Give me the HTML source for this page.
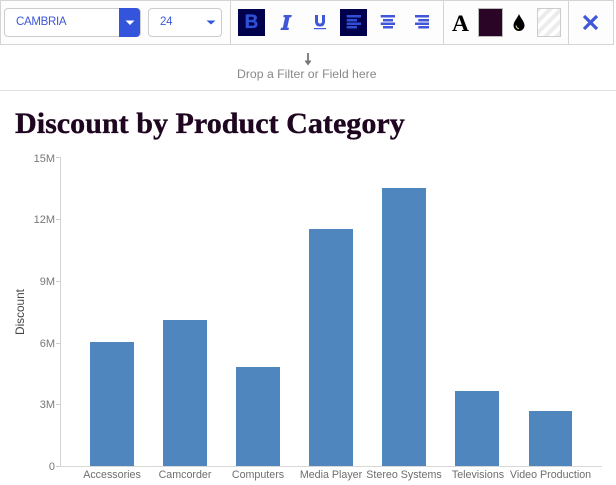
<!DOCTYPE html>
<html><head><meta charset="utf-8">
<style>
html,body{margin:0;padding:0;background:#fff;}
body{width:616px;height:485px;position:relative;overflow:hidden;font-family:"Liberation Sans",sans-serif;}
.a{position:absolute;}
.t{position:absolute;white-space:nowrap;}
.yl{position:absolute;right:561px;font-size:11px;color:#777;line-height:12px;}
.xl{position:absolute;top:468.500px;width:90px;text-align:center;font-size:10.700px;color:#6e6e6e;line-height:13px;white-space:nowrap;}
.bar{position:absolute;background:#5086be;width:44px;}
.tick{position:absolute;left:56px;width:4px;height:1px;background:#ccc;}
</style></head><body>
<div class="a" style="left:0;top:0;width:612px;height:43px;background:#fdfdfd;border:1px solid #d4d4d4;"></div>
<div class="a" style="left:230px;top:0;width:1px;height:44px;background:#d4d4d4;"></div>
<div class="a" style="left:443px;top:0;width:1px;height:44px;background:#d4d4d4;"></div>
<div class="a" style="left:568px;top:0;width:1px;height:44px;background:#d4d4d4;"></div>

<div class="a" style="left:4px;top:8px;width:135px;height:27px;border:1px solid #ccc;border-radius:4px;background:#fff;"></div>
<div class="t" style="left:16px;top:15px;font-size:11.500px;letter-spacing:-.3px;line-height:14px;color:#3f57d8;">CAMBRIA</div>
<div class="a" style="left:119px;top:8px;width:21px;height:29px;background:#3455db;border-radius:0 4px 4px 0;"></div>
<svg class="a" style="left:119px;top:8px" width="21" height="29"><path d="M6.500 12.500h9l-4.500 4.500z" fill="#fff"/></svg>
<div class="a" style="left:148px;top:8px;width:72px;height:27px;border:1px solid #ccc;border-radius:4px;background:#fff;"></div>
<div class="t" style="left:160px;top:15px;font-size:11.500px;letter-spacing:-.3px;line-height:14px;color:#3f57d8;">24</div>
<svg class="a" style="left:205px;top:19px" width="12" height="8"><path d="M1.500 1.500h9l-4.500 4z" fill="#3455db"/></svg>

<div class="a" style="left:238px;top:9px;width:27px;height:27px;background:#00004d;"></div>
<div class="t" style="left:238px;top:8.500px;width:27px;text-align:center;font-size:19px;line-height:27px;font-weight:bold;color:#2f50d4;-webkit-text-stroke:.3px #2f50d4;">B</div>
<svg class="a" style="left:278px;top:12px" width="16" height="20"><path d="M5.800 3h8l-.5 2.300h-1.800L9.200 15.700h1.800l-.5 2.300h-8l.5-2.300h1.800L7.100 5.300H5.300z" fill="#3f57d8"/></svg>
<svg class="a" style="left:312px;top:12px" width="16" height="19"><path d="M4.500 3v6.500c0 2.500 1.300 3.500 3.500 3.500s3.500-1 3.500-3.500V3" stroke="#3f57d8" stroke-width="3" fill="none"/><rect x="2" y="16" width="12" height="1.200" fill="#3f57d8"/></svg>

<div class="a" style="left:340px;top:9px;width:27px;height:27px;background:#00004d;"></div>
<svg class="a" style="left:340px;top:9px" width="27" height="27" fill="#2f50d4"><rect x="6.700" y="6" width="14.300" height="2.500"/><rect x="6.700" y="10" width="10.300" height="2.500"/><rect x="6.700" y="13.500" width="14.300" height="2.500"/><rect x="6.700" y="17" width="10.300" height="2.500"/></svg>
<svg class="a" style="left:375px;top:9px" width="27" height="27" fill="#3f57d8"><rect x="5.700" y="6" width="14.300" height="2.500"/><rect x="8" y="10" width="10" height="2.500"/><rect x="5.700" y="13.500" width="14.300" height="2.500"/><rect x="8" y="17" width="10" height="2.500"/></svg>
<svg class="a" style="left:409px;top:9px" width="27" height="27" fill="#3f57d8"><rect x="6" y="6" width="14" height="2.500"/><rect x="9.300" y="10" width="10.700" height="2.500"/><rect x="6" y="13.500" width="14" height="2.500"/><rect x="9.300" y="17" width="10.700" height="2.500"/></svg>

<div class="t" style="left:447px;top:9.500px;width:27px;text-align:center;font-family:'Liberation Serif',serif;font-weight:bold;font-size:23.500px;line-height:28px;color:#000;">A</div>
<div class="a" style="left:478px;top:8px;width:25px;height:29px;box-sizing:border-box;background:#2a0526;border:1px solid #bbb;"></div>
<svg class="a" style="left:511px;top:13px" width="16" height="19"><path d="M8 1C6.500 5 2.500 8.500 2.500 12.500a5.500 5.500 0 0 0 11 0C13.500 8.500 9.500 5 8 1z" fill="#000"/><path d="M5 12.500c.3 2 1.500 3 3 3.300" stroke="#e8d0a0" stroke-width="1" fill="none"/></svg>
<svg class="a" style="left:537px;top:8px" width="24" height="29">
<defs><pattern id="h" width="8" height="8" patternUnits="userSpaceOnUse" patternTransform="rotate(-45)"><rect width="8" height="8" fill="#fff"/><rect width="8" height="4" fill="#ececec"/></pattern></defs>
<rect x=".5" y=".5" width="23" height="28" fill="url(#h)" stroke="#ccc"/></svg>
<svg class="a" style="left:582px;top:14px" width="17" height="17"><path d="M2 2L15 15M15 2L2 15" stroke="#3f57d8" stroke-width="3.200" fill="none"/></svg>

<svg class="a" style="left:304px;top:52px" width="8" height="14"><path d="M4 1v10M1.500 8.500L4 12l2.500-3.500" stroke="#777" stroke-width="1.800" fill="none"/></svg>
<div class="t" style="left:237px;top:67px;font-size:12.250px;line-height:15px;color:#888;">Drop a Filter or Field here</div>
<div class="a" style="left:0;top:90px;width:616px;height:1px;background:#e0e0e0;"></div>

<div class="t" style="left:15px;top:105.500px;font-family:'Liberation Serif',serif;font-weight:bold;font-size:30.100px;line-height:35px;color:#1e0520;-webkit-text-stroke:.35px #1e0520;">Discount by Product Category</div>

<div class="a" style="left:60px;top:157px;width:1px;height:310px;background:#d4d4d4;"></div>
<div class="a" style="left:60px;top:466px;width:542px;height:1px;background:#d8d8d8;"></div>
<div class="tick" style="top:157px"></div><div class="tick" style="top:219px"></div><div class="tick" style="top:281px"></div><div class="tick" style="top:343px"></div><div class="tick" style="top:404px"></div><div class="tick" style="top:466px"></div>
<div class="yl" style="top:153px">15M</div>
<div class="yl" style="top:214px">12M</div>
<div class="yl" style="top:276px">9M</div>
<div class="yl" style="top:338px">6M</div>
<div class="yl" style="top:399px">3M</div>
<div class="yl" style="top:461px">0</div>
<div class="t" style="left:13px;top:305px;width:14px;height:14px;font-size:11.800px;line-height:14px;color:#444;transform:rotate(-90deg);transform-origin:center;display:flex;justify-content:center;">Discount</div>

<div class="bar" style="left:90px;top:342px;height:124px"></div>
<div class="bar" style="left:163px;top:320px;height:146px"></div>
<div class="bar" style="left:236px;top:367px;height:99px"></div>
<div class="bar" style="left:309px;top:229px;height:237px"></div>
<div class="bar" style="left:382px;top:188px;height:278px"></div>
<div class="bar" style="left:455px;top:391px;height:75px"></div>
<div class="bar" style="left:529px;top:411px;height:55px;width:43px"></div>

<div class="xl" style="left:67px">Accessories</div>
<div class="xl" style="left:140px">Camcorder</div>
<div class="xl" style="left:213px">Computers</div>
<div class="xl" style="left:286px">Media Player</div>
<div class="xl" style="left:359px">Stereo Systems</div>
<div class="xl" style="left:433px">Televisions</div>
<div class="xl" style="left:505.500px">Video Production</div>
</body></html>
